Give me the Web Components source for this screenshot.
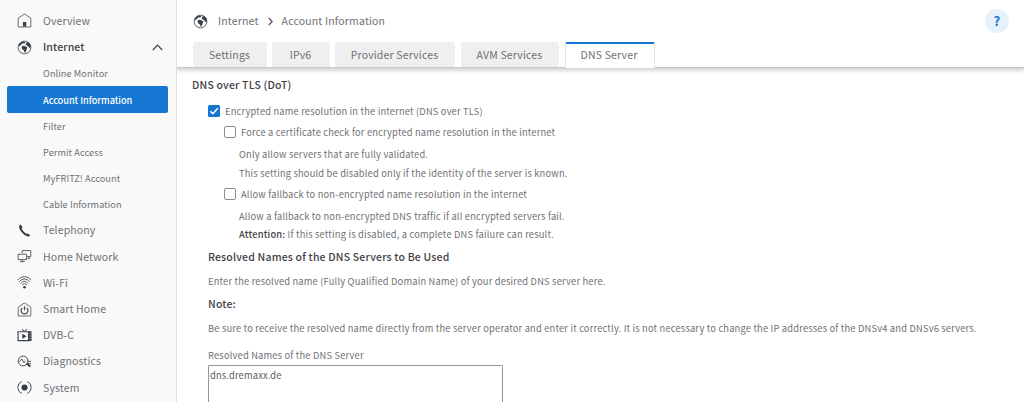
<!DOCTYPE html>
<html lang="en">
<head>
<meta charset="utf-8">
<title>Account Information</title>
<style>
html,body{margin:0;height:100%;overflow:hidden;background:#fff}
body{font-family:"Noto Sans CJK SC","Noto Sans",sans-serif;color:#707074}
</style>
</head>
<body>
<app-shell>
  <nav-menu slot="nav">
    <nav-item icon="home">Overview</nav-item>
    <nav-item icon="globe" open>Internet</nav-item>
    <nav-item sub>Online Monitor</nav-item>
    <nav-item sub active>Account Information</nav-item>
    <nav-item sub>Filter</nav-item>
    <nav-item sub>Permit Access</nav-item>
    <nav-item sub>MyFRITZ! Account</nav-item>
    <nav-item sub>Cable Information</nav-item>
    <nav-item icon="phone">Telephony</nav-item>
    <nav-item icon="network">Home Network</nav-item>
    <nav-item icon="wifi">Wi-Fi</nav-item>
    <nav-item icon="smart">Smart Home</nav-item>
    <nav-item icon="tv">DVB-C</nav-item>
    <nav-item icon="diag">Diagnostics</nav-item>
    <nav-item icon="system">System</nav-item>
  </nav-menu>
  <page-header slot="header">
    <span slot="section">Internet</span>
    <span slot="page">Account Information</span>
    <tab-item style="width:74px">Settings</tab-item>
    <tab-item style="width:58px">IPv6</tab-item>
    <tab-item style="width:120px">Provider Services</tab-item>
    <tab-item style="width:98px;margin-left:1px">AVM Services</tab-item>
    <tab-item style="width:90px" active>DNS Server</tab-item>
  </page-header>
  <text-row heading style="padding-top:9px">DNS over TLS (DoT)</text-row>
  <check-row checked style="padding:8px 0 0 16px">Encrypted name resolution in the internet (DNS over TLS)</check-row>
  <check-row style="padding:3px 0 0 32px">Force a certificate check for encrypted name resolution in the internet</check-row>
  <text-row style="padding:4px 0 0 47px">Only allow servers that are fully validated.</text-row>
  <text-row style="padding:1px 0 0 47px">This setting should be disabled only if the identity of the server is known.</text-row>
  <check-row style="padding:3px 0 0 32px">Allow fallback to non-encrypted name resolution in the internet</check-row>
  <text-row style="padding:4px 0 0 47px">Allow a fallback to non-encrypted DNS traffic if all encrypted servers fail.</text-row>
  <text-row style="padding:0 0 0 47px"><b>Attention:</b> If this setting is disabled, a complete DNS failure can result.</text-row>
  <text-row heading style="padding:5px 0 0 16px">Resolved Names of the DNS Servers to Be Used</text-row>
  <text-row style="padding:6px 0 0 16px">Enter the resolved name (Fully Qualified Domain Name) of your desired DNS server here.</text-row>
  <text-row heading style="padding:5px 0 0 16px">Note:</text-row>
  <text-row style="padding:6px 0 0 16px">Be sure to receive the resolved name directly from the server operator and enter it correctly. It is not necessary to change the IP addresses of the DNSv4 and DNSv6 servers.</text-row>
  <text-row style="padding:9px 0 0 16px">Resolved Names of the DNS Server</text-row>
  <server-box style="margin:1px 0 0 16px">dns.dremaxx.de</server-box>
</app-shell>
<script>
const ICONS={
home:'<path d="M1.2 14V5.2L7.5 .9l6.3 4.3V14z" fill="none" stroke="#6a6e73" stroke-width="1"/><path d="M5.9 9h3.4v4.6H5.9z" fill="#3a4148"/>',
globe:'<circle cx="7.5" cy="7.5" r="6.4" fill="none" stroke="#53585e" stroke-width=".9"/><path d="M2 4.2 4.6 1.9 7.4 1.6 8.6 2.6 7 3.4 5.6 3.2 4.6 4.2 3.2 5.6 1.6 6.4Z M4.6 6.6 6.4 5.8 8.4 6.2 10.4 7.6 9.6 9.6 8.6 12.2 7.6 12.8 7 10.6 5 9Z M8.6 4.4 9.6 2.2 11.8 2.4 13.4 4.6 13.7 7 12.6 8.2 11.4 6.4 9.8 5.6Z" fill="#3a4148"/>',
phone:'<path d="M2.2 2.4 3.9 1.6 5.5 4.4 4.7 5.5C5.7 7.9 7.3 9.6 9.6 10.9L10.7 10.4 13.2 12.3 12 13.5C8 13.6 1.2 7.2 2.2 2.4Z" fill="#343b42"/>',
network:'<path d="M5.2 4.2V1.6h8.6v6h-3.6M1.1 5.2h8.4v5.4H1.1zM5.2 10.6v1.8M2.8 12.6h5M11.8 7.6v1.9M10.6 9.6h2.6" fill="none" stroke="#5a5f65" stroke-width="1"/>',
wifi:'<path d="M.9 5C4.7 .6 10.3 .6 14.1 5M2.3 6.7C5.3 3.1 9.7 3.1 12.7 6.7M3.7 8.4C6 5.6 9 5.6 11.3 8.4M5.2 9.9C6.5 8.3 8.5 8.3 9.8 9.9" fill="none" stroke="#4a4f55" stroke-width=".95"/><circle cx="7.5" cy="12.2" r="1.3" fill="#343b42"/>',
smart:'<path d="M1.2 14V5.2L7.5 .9l6.3 4.3V14z" fill="none" stroke="#6a6e73" stroke-width="1"/><path d="M5.3 5.9a3.4 3.4 0 1 0 4.4 0M7.5 4.3v4" fill="none" stroke="#3f454b" stroke-width="1.2"/>',
tv:'<path d="M1 3.8h10.6v8.8H1z" fill="none" stroke="#3a4148" stroke-width="1.1"/><path d="M11.4 3.3h3.1v9.8h-3.1zM5.3 5.8v5l4.2-2.5z" fill="#343b42"/><path d="M5 1.2 7.5 3.4 10 1.2" fill="none" stroke="#3a4148"/><path d="M12.3 5.5h1.4M12.3 8h1.4M12.3 10.5h1.4" stroke="#ddd" stroke-width=".8"/>',
diag:'<circle cx="6.1" cy="7" r="4.9" fill="none" stroke="#4a4f55"/><path d="M2.4 7.8 4.8 4.8 7 8.8 8.3 6.6M10.4 7.4h3.6M10.8 9.6h3.2" fill="none" stroke="#4a4f55" stroke-width=".9"/><path d="m9.4 9.5 4 3" stroke="#343b42" stroke-width="1.8"/>',
system:'<circle cx="7.5" cy="7.5" r="3" fill="#343b42"/><path d="M4.8 1.5a6.5 6.5 0 0 0 0 12M10.2 1.5a6.5 6.5 0 0 1 0 12" fill="none" stroke="#4a4f55"/>'
};
const svg=n=>`<svg width="15" height="15" viewBox="0 0 15 15">${ICONS[n]}</svg>`;
const define=(name,render)=>customElements.define(name,class extends HTMLElement{
  connectedCallback(){if(!this.shadowRoot)this.attachShadow({mode:'open'}).innerHTML=render(this);}
});
define('app-shell',()=>`<style>
:host{display:grid;grid-template-columns:177px 1fr;height:402px;overflow:hidden}
aside{box-sizing:border-box;background:#f9f9f9;border-right:1px solid #e0e0e0}
section{min-width:0;display:flex;flex-direction:column}
main{padding-left:15px;display:flex;flex-direction:column}
</style><aside><slot name="nav"></slot></aside><section><slot name="header"></slot><main><slot></slot></main></section>`);
define('nav-menu',()=>`<style>:host{display:flex;flex-direction:column;padding:7.9px 8px 0 7px}</style><slot></slot>`);
define('nav-item',e=>`<style>
:host{display:flex;align-items:center;height:26.19px;font-size:10.5px;letter-spacing:.13px;line-height:16px;white-space:nowrap;border-radius:2px}
:host([sub]){font-size:9.2px;letter-spacing:.07px}
:host([open]){font-weight:500;color:#3f4145}
:host([active]){background:#1677d2;color:#fff;font-weight:500;letter-spacing:-.04px}
i{width:15px;height:15px;margin:0 11px 0 10px;flex:none}
svg{display:block}.a{margin-left:auto;margin-right:5px}
</style><i>${e.hasAttribute('icon')?svg(e.getAttribute('icon')):''}</i><slot></slot>${e.hasAttribute('open')?'<svg class="a" width="11" height="7" viewBox="0 0 11 7"><path d="M.8 6 5.5 1.2 10.2 6" fill="none" stroke="#3f4145" stroke-width="1.2"/></svg>':''}`);
define('page-header',()=>`<style>
:host{display:flex;flex-direction:column;height:67px;flex:none;position:relative;background:#fff;box-shadow:0 1px 0 #c8c8c8,0 2px 5px 1px #c8c8c8;clip-path:inset(0 0 -10px 0)}
.c{display:flex;flex:none;align-items:center;height:42px;padding:0 15px 0 16px;font-size:10.5px;letter-spacing:.17px;line-height:16px}
.c svg{display:block}.g{width:15px;margin-right:10.5px;margin-left:-.5px}.v{margin:0 9px 0 9px}
.h{margin-left:auto;width:24px;height:24px;border-radius:50%;background:#e7f1fa;color:#1677d2;font-weight:700;font-size:13px;line-height:23px;text-align:center}
.t{display:flex;flex:none;gap:5px;padding-left:16px}
</style><div class="c"><div class="g">${svg('globe')}</div><slot name="section"></slot><svg class="v" width="5" height="9" viewBox="0 0 5 9"><path d="M.7.8 4.2 4.5.7 8.2" fill="none" stroke="#3f4145" stroke-width="1.1"/></svg><slot name="page"></slot><div class="h">?</div></div><div class="t"><slot></slot></div>`);
define('tab-item',()=>`<style>
:host{display:block;box-sizing:border-box;height:25px;background:#efefef;border-radius:3px 3px 0 0;font-size:10.5px;letter-spacing:.17px;line-height:26px;text-align:center;text-indent:-1px;white-space:nowrap}
:host([active]){height:26px;background:#fff;border:1px solid #e2e2e2;border-top:2px solid #1677d2;border-bottom:0;border-radius:2px 2px 0 0;line-height:22px;margin-left:1px;text-indent:-2px}
</style><slot></slot>`);
define('text-row',()=>`<style>
:host{display:block;font-size:9.3px;letter-spacing:.194px;line-height:18px;white-space:nowrap}
:host([heading]){font-size:10.5px;letter-spacing:.18px;font-weight:500;color:#3f4145}
::slotted(b){font-weight:500;color:#3f4145}
</style><slot></slot>`);
define('check-row',e=>`<style>
:host{display:flex;align-items:center;font-size:9.3px;letter-spacing:.19px;line-height:18px;white-space:nowrap}
svg{flex:none;margin-right:5px}
</style><svg width="12" height="12" viewBox="0 0 12 12">${e.hasAttribute('checked')?'<rect width="12" height="12" rx="1.5" fill="#1677d2"/><path d="M2.3 6.2 4.8 8.7 9.8 3.3" fill="none" stroke="#fff" stroke-width="1.6"/>':'<rect x=".5" y=".5" width="11" height="11" rx="1.5" fill="#fff" stroke="#8c8c8c"/>'}</svg><slot></slot>`);
define('server-box',()=>`<style>
:host{display:block;box-sizing:border-box;width:295px;height:60px;border:1px solid #969696;border-radius:1px;padding:0 1px;font-size:9.3px;letter-spacing:.18px;line-height:18px;color:#5c5c61}
</style><slot></slot>`);
</script>
</body>
</html>
